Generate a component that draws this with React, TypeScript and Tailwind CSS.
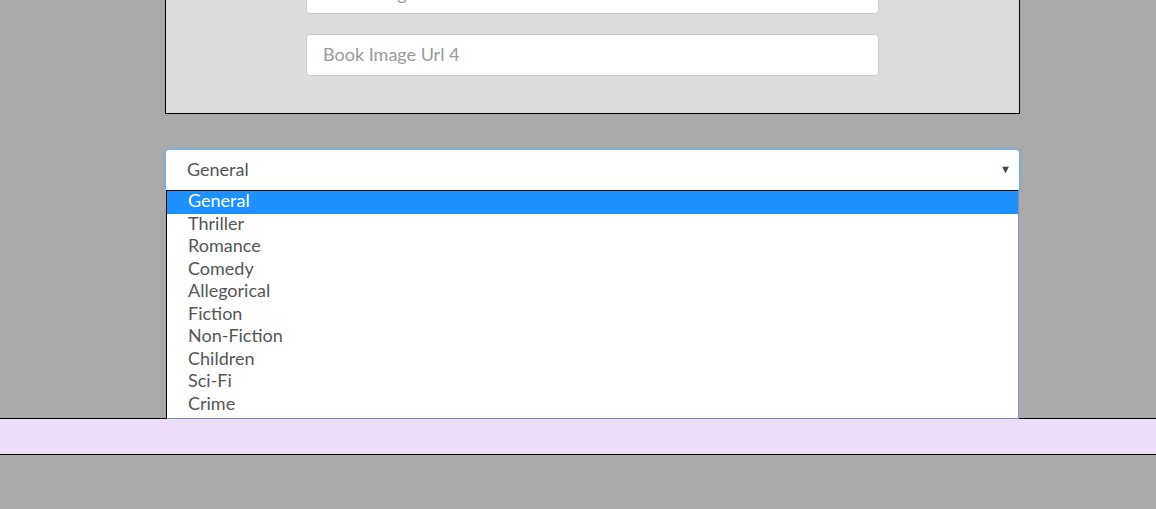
import React from 'react'

const genres = ['General', 'Thriller', 'Romance', 'Comedy', 'Allegorical', 'Fiction', 'Non-Fiction', 'Children', 'Sci-Fi', 'Crime']

export default function App() {
  const font = { fontFamily: 'Lato, "Noto Sans", sans-serif' }

  return (
    <div className="min-h-[509px] overflow-hidden bg-[#a9a9a9]" style={font}>
      {/* form panel, scrolled past its top */}
      <div className="ml-[165px] w-[855px] border-x border-b border-black bg-[#dcdcdc] px-[140px] pb-[37px]">
        <div className="-mt-[28px] flex h-[42px] items-center rounded border border-[#cccccc] bg-white px-4 text-[18px] text-[#999]">
          Book Image Url 3
        </div>
        <div className="mt-[20px] flex h-[42px] items-center rounded border border-[#cccccc] bg-white px-4 pb-[2px] text-[18px] text-[#999]">
          Book Image Url 4
        </div>
      </div>

      {/* genre select, open */}
      <div className="relative ml-[165px] mt-[35px] w-[855px]">
        <div className="flex h-[42px] items-center justify-between rounded-t border border-[#66afe9] bg-white pb-[2px] pl-[21px] pr-[8px] text-[18px] text-[#555] shadow-[0_0_3px_rgba(102,175,233,0.6)]">
          <span>General</span>
          <span className="text-[11px] text-[#444]">▼</span>
        </div>
        <ul className="absolute left-[1px] right-[1px] top-[41px] z-10 border-t border-l border-t-black border-l-black border-r border-b border-r-[#7a8fc4] border-b-[#7a8fc4] bg-white pb-[2px] text-[18px] text-[#555]">
          {genres.map((g, i) => (
            <li
              key={g}
              className={
                i === 0
                  ? 'h-[22.5px] bg-[#1e90ff] pl-[21px] leading-[19px] text-white'
                  : 'h-[22.5px] pl-[21px] leading-[19px]'
              }
            >
              {g}
            </li>
          ))}
        </ul>
      </div>

      <div className="h-[227px]" />

      <footer className="h-[37px] border-y border-black bg-[#ecdef8]" />
    </div>
  )
}
